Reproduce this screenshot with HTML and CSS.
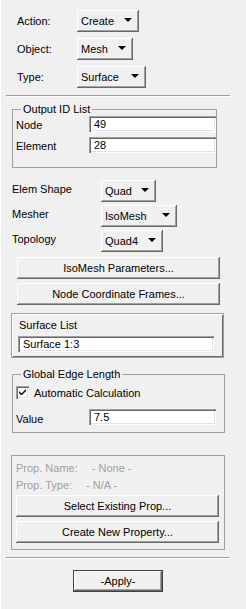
FILE: index.html
```html
<!DOCTYPE html>
<html lang="en">
  <head>
    <meta charset="UTF-8" />
    <meta name="viewport" content="width=device-width, initial-scale=1.0" />
    <title>Finite Elements</title>
    <link rel="stylesheet" href="styles.css">
  </head>
  <body>
    <div class="panel">
      <div class="selects">
        <span>Action:</span>
        <button class="combo w-create">Create</button>
        <span>Object:</span>
        <button class="combo w-mesh">Mesh</button>
        <span>Type:</span>
        <button class="combo w-surface">Surface</button>
      </div>

      <div class="sep"></div>

      <fieldset class="group ids">
        <legend>Output ID List</legend>
        <div class="field">
          <label for="node">Node</label>
          <input type="text" id="node" value="49" />
        </div>
        <div class="field">
          <label for="element">Element</label>
          <input type="text" id="element" value="28" />
        </div>
      </fieldset>

      <div class="mesh-opts">
        <span>Elem Shape</span>
        <button class="combo w-quad">Quad</button>
        <span>Mesher</span>
        <button class="combo w-isomesh">IsoMesh</button>
        <span>Topology</span>
        <button class="combo w-quad4">Quad4</button>
      </div>

      <div class="wide-btns">
        <button class="btn">IsoMesh Parameters...</button>
        <button class="btn">Node Coordinate Frames...</button>
      </div>

      <div class="surface-box">
        <div class="box-title">Surface List</div>
        <input type="text" value="Surface 1:3" />
      </div>

      <fieldset class="group edge">
        <legend>Global Edge Length</legend>
        <div class="check-row">
          <span class="check">
            <svg width="7" height="7" viewBox="0 0 7 7"><path d="M0 2 L0 4 L2 6 L3 6 L7 2 L7 0 L2.5 4.5 Z" fill="#000"/></svg>
          </span>
          <span>Automatic Calculation</span>
        </div>
        <div class="field value">
          <label for="value">Value</label>
          <input type="text" id="value" value="7.5" />
        </div>
      </fieldset>

      <div class="prop-box">
        <div class="prop-line"><span>Prop. Name:</span><span class="prop-val">- None -</span></div>
        <div class="prop-line"><span>Prop. Type:</span><span class="prop-val">- N/A -</span></div>
        <button class="btn">Select Existing Prop...</button>
        <button class="btn">Create New Property...</button>
      </div>

      <div class="sep bottom"></div>

      <button class="btn apply">-Apply-</button>
    </div>
  </body>
</html>
```

FILE: styles.css
```css
body {
  margin: 0;
  background: #f0f0f0;
  font: 11px "Liberation Sans", Arial, sans-serif;
  color: #000;
}

.panel {
  height: 609px;
  box-sizing: border-box;
  border-left: 1px solid #fff;
  display: flex;
  flex-direction: column;
  align-items: flex-start;
}

button {
  font: inherit;
  color: #000;
  margin: 0;
  cursor: default;
}

.btn,
.combo {
  height: 22px;
  background: #f0f0f0;
  border: none;
  box-shadow: inset -1px -1px #696969, inset 1px 1px #fff, inset -2px -2px #a0a0a0, inset 2px 2px #f0f0f0;
}

.combo {
  display: flex;
  align-items: center;
  justify-content: space-between;
  padding: 0 7px 0 4px;
}

.combo::after {
  content: "";
  border-left: 4px solid transparent;
  border-right: 4px solid transparent;
  border-top: 4px solid #000;
  margin-top: -2px;
}

.w-create { width: 62px; }
.w-mesh { width: 56px; }
.w-surface { width: 69px; }
.w-quad { width: 55px; }
.w-isomesh { width: 76px; }
.w-quad4 { width: 62px; }

.selects {
  margin: 10px 0 0 16px;
  display: grid;
  grid-template-columns: 60px auto;
  row-gap: 6px;
  align-items: center;
  justify-items: start;
}

.sep {
  margin: 7px 0 0 5px;
  width: 224px;
  height: 1px;
  border-bottom: 1px solid #fff;
  background: #a0a0a0;
}

input[type="text"] {
  font: inherit;
  height: 16px;
  box-sizing: border-box;
  border: none;
  padding: 0 5px;
  background: #fff;
  box-shadow: inset 1px 1px #a0a0a0, inset 2px 2px #696969, inset -1px -1px #fff, inset -2px -2px #e3e3e3;
  outline: none;
}

.group {
  margin: 0;
  border: 1px solid #a0a0a0;
  padding: 0 0 0 3px;
}

.group legend {
  padding: 0 2px;
  margin-left: 5px;
  line-height: 14px;
}

.ids {
  margin: 5px 0 0 11px;
  width: 204px;
  box-sizing: border-box;
  padding-bottom: 14px;
  display: flex;
  flex-direction: column;
  gap: 5px;
}

.field {
  display: flex;
  align-items: center;
}

.field label {
  width: 73px;
  padding-top: 2px;
}

.field input {
  width: 127px;
}

.mesh-opts {
  margin: 12px 0 0 11px;
  display: grid;
  grid-template-columns: 89px auto;
  row-gap: 3px;
  align-items: center;
  justify-items: start;
}

.mesh-opts span {
  margin-top: -4px;
}

.wide-btns {
  margin: 5px 0 0 16px;
  display: flex;
  flex-direction: column;
  gap: 4px;
}

.wide-btns .btn {
  width: 203px;
}

.surface-box {
  margin: 8px 0 0 10px;
  width: 213px;
  box-sizing: border-box;
  padding: 3px 8px 5px 6px;
  border: 1px solid #a0a0a0;
  box-shadow: inset 1px 1px #fff, inset -1px -1px #696969;
  display: flex;
  flex-direction: column;
  gap: 4px;
}

.surface-box .box-title {
  line-height: 14px;
  padding: 1px 0 0 1px;
}

.surface-box input {
  width: 196px;
}

.edge {
  margin: 9px 0 0 11px;
  width: 213px;
  box-sizing: border-box;
  padding-bottom: 7px;
}

.check-row {
  margin-top: 5px;
  display: flex;
  align-items: center;
  gap: 5px;
}

.check {
  width: 13px;
  height: 13px;
  box-sizing: border-box;
  background: #fff;
  box-shadow: inset 1px 1px #a0a0a0, inset 2px 2px #696969, inset -1px -1px #fff, inset -2px -2px #e3e3e3;
  display: flex;
  align-items: center;
  justify-content: center;
}

.value {
  margin-top: 10px;
}

.value label {
  padding-top: 4px;
}

.prop-box {
  margin: 22px 0 0 10px;
  width: 214px;
  box-sizing: border-box;
  border: 1px solid #a0a0a0;
  padding: 5px 0 6px 4px;
  display: flex;
  flex-direction: column;
  gap: 3px;
}

.prop-line {
  color: #a0a0a0;
  line-height: 14px;
}

.prop-val {
  margin-left: 14px;
}

.prop-box .btn {
  width: 203px;
}

.prop-box .btn + .btn {
  margin-top: 1px;
}

.sep.bottom {
  margin-top: 7px;
}

.apply {
  margin: 11px 0 0 72px;
  width: 90px;
  box-shadow: inset 0 0 0 1px #404040, inset -2px -2px #696969, inset 2px 2px #fff, inset -3px -3px #a0a0a0;
}
```
